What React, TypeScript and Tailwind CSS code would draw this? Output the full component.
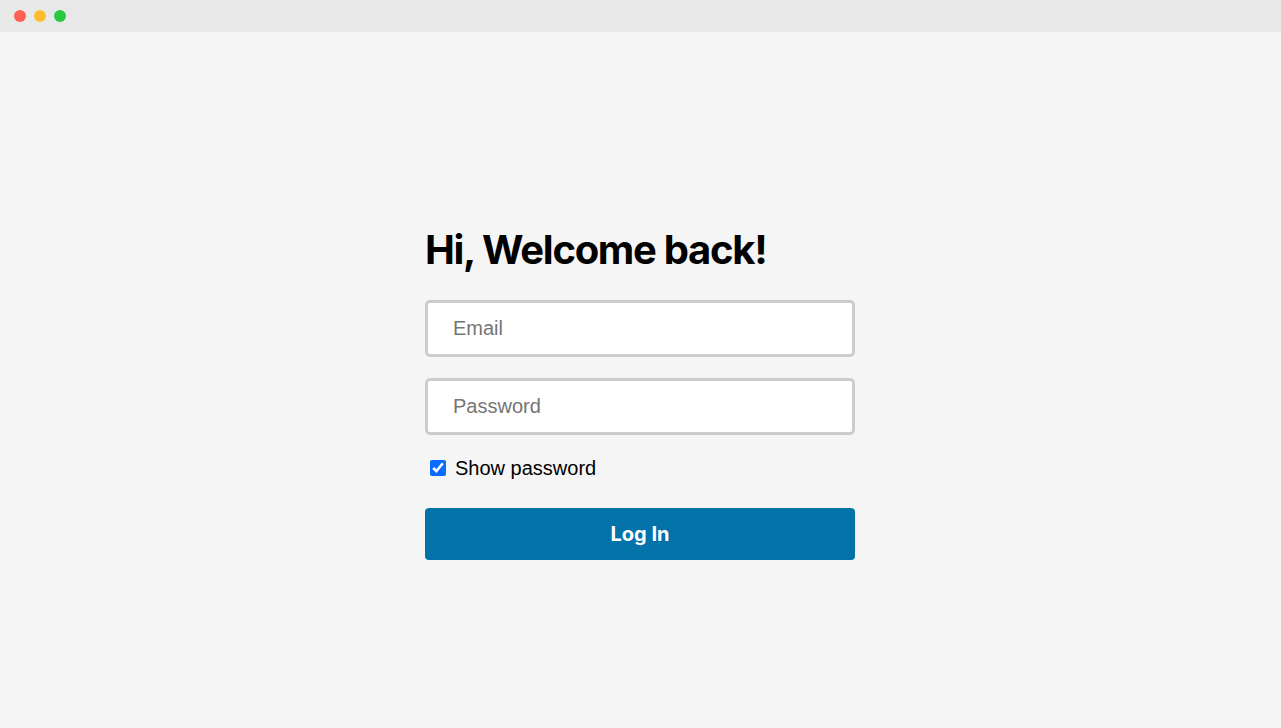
import { useState } from "react";

export default function App() {
  const [show, setShow] = useState(true);

  return (
    <div className="h-[728px] w-full bg-[#f5f5f5] flex flex-col overflow-hidden" style={{ fontFamily: "'Liberation Sans', Arial, sans-serif" }}>
      <div className="h-8 bg-[#e8e8e8] flex items-center gap-2 pl-[14px] shrink-0">
        <span className="w-3 h-3 rounded-full bg-[#ff5f57]" />
        <span className="w-3 h-3 rounded-full bg-[#febc2e]" />
        <span className="w-3 h-3 rounded-full bg-[#28c840]" />
      </div>

      <div className="flex-1 flex justify-center pt-[194px] pr-[1px]">
        <form className="w-[430px] flex flex-col" onSubmit={(e) => e.preventDefault()}>
          <h1 className="text-[40px] leading-[48px] font-bold tracking-[-1.3px] text-black" style={{ fontFamily: "Inter, 'Liberation Sans', sans-serif" }}>
            Hi, Welcome back!
          </h1>

          <input
            type="email"
            placeholder="Email"
            className="mt-[26px] h-[57px] w-full rounded-[5px] border-[3px] border-[#cccccc] bg-white pl-[25px] text-[20px] text-black placeholder:text-[#757575] outline-none"
          />
          <input
            type={show ? "text" : "password"}
            placeholder="Password"
            className="mt-[21px] h-[57px] w-full rounded-[5px] border-[3px] border-[#cccccc] bg-white pl-[25px] text-[20px] text-black placeholder:text-[#757575] outline-none"
          />

          <label className="mt-[18px] flex items-center gap-[9px] pl-[5px] text-[20px] text-black">
            <input type="checkbox" checked={show} onChange={() => setShow(!show)} className="w-4 h-4 accent-[#0a6cff]" />
            Show password
          </label>

          <button type="submit" className="mt-[25px] h-[52px] w-full rounded-[4px] bg-[#0372a9] text-white text-[20px] font-bold" style={{ fontFamily: "Inter, 'Liberation Sans', sans-serif" }}>
            Log In
          </button>
        </form>
      </div>
    </div>
  );
}
